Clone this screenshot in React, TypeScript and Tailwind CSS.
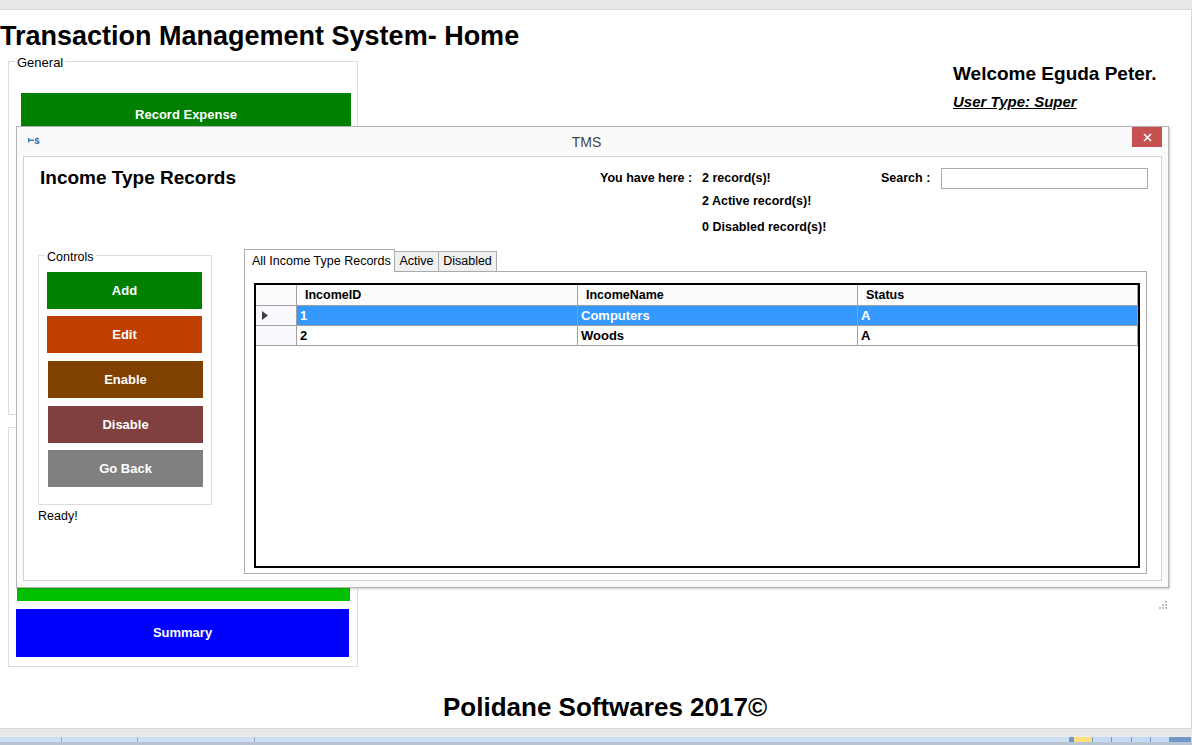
const font = "font-['Liberation_Sans',Arial,sans-serif]";

function ActionButton({ label, className }: { label: string; className: string }) {
  return (
    <button className={`flex h-[37px] w-[155px] items-center justify-center text-[13px] font-bold text-white ${className}`}>
      {label}
    </button>
  );
}

function Cell({ children, className = "" }: { children?: React.ReactNode; className?: string }) {
  return <div className={`flex items-center overflow-hidden border-r border-b border-[#a0a0a0] pl-[3px] text-[13px] font-bold ${className}`}>{children}</div>;
}

function HeaderCell({ children, className = "" }: { children?: React.ReactNode; className?: string }) {
  return <div className={`flex items-center border-r border-b border-[#a0a0a0] bg-[#fbfbfb] pl-[8px] text-[12.5px] font-bold ${className}`}>{children}</div>;
}

function Grip() {
  return (
    <svg className="absolute left-[1135px] top-[444px]" width="8" height="8" viewBox="0 0 8 8" fill="#c4c4c4">
      <rect x="6" y="0" width="2" height="2" />
      <rect x="3" y="3" width="2" height="2" />
      <rect x="6" y="3" width="2" height="2" />
      <rect x="0" y="6" width="2" height="2" />
      <rect x="3" y="6" width="2" height="2" />
      <rect x="6" y="6" width="2" height="2" />
    </svg>
  );
}

function Modal() {
  return (
    <div className="absolute left-[16px] top-[126px] flex h-[462px] w-[1153px] flex-col border border-[#b4b4b4] bg-[#fafafa] shadow-[1px_1px_2px_rgba(0,0,0,0.2)]">
      <div className="flex h-[29px] shrink-0 items-start">
        <svg className="ml-[11px] mt-[9px]" width="13" height="10" viewBox="0 0 13 10">
          <path d="M0 2h1.5v1.5H6V5H1.5v1.5H0z" fill="#2a86c8" />
          <text x="6.5" y="8" fontSize="9" fontWeight="700" fill="#1a6aa8" fontFamily="Liberation Sans">$</text>
        </svg>
        <div className="flex-1 pt-[5px] pl-[-2px] text-center text-[14px] text-[#444444] font-['Liberation_Sans',sans-serif]">TMS</div>
        <button className="mr-[6px] flex h-[20px] w-[30px] items-center justify-center bg-[#c75050]">
          <svg width="9" height="9" viewBox="0 0 9 9" stroke="#ffffff" strokeWidth="1.6">
            <path d="M1 1l7 7M8 1l-7 7" />
          </svg>
        </button>
      </div>

      <div className="relative mx-[6px] h-[425px] border border-[#d2d2d2] bg-white">
        <div className="flex h-[91px]">
          <h2 className="ml-[16px] mt-[9px] w-[560px] text-[19px] font-bold leading-[24px]">Income Type Records</h2>
          <div className="flex text-[12.5px] font-bold">
            <div className="w-[102px] pt-[14px] leading-[15px]">You have here :</div>
            <div className="flex w-[179px] flex-col pt-[14px] leading-[15px]">
              <span>2 record(s)!</span>
              <span className="mt-[8px]">2 Active record(s)!</span>
              <span className="mt-[11px]">0 Disabled record(s)!</span>
            </div>
            <div className="w-[60px] pt-[14px] leading-[15px]">Search :</div>
            <input className="mt-[11px] h-[21px] w-[207px] border border-[#ababab] bg-white" />
          </div>
        </div>

        <div className="flex">
          <div className="ml-[14px] w-[206px] shrink-0">
            <div className="relative mt-[7px] flex h-[250px] w-[174px] flex-col border border-[#dddddd] pt-[16px]">
              <span className="absolute left-[6px] top-[-6px] bg-white px-[2px] text-[12.5px] leading-[14px]">Controls</span>
              <ActionButton label="Add" className="ml-[8px] bg-[#008000]" />
              <ActionButton label="Edit" className="ml-[8px] mt-[7px] bg-[#c04000]" />
              <ActionButton label="Enable" className="ml-[9px] mt-[8px] bg-[#804000]" />
              <ActionButton label="Disable" className="ml-[9px] mt-[8px] bg-[#804040]" />
              <ActionButton label="Go Back" className="ml-[9px] mt-[7px] bg-[#808080]" />
            </div>
            <div className="mt-[4px] text-[12.5px] leading-[14px]">Ready!</div>
          </div>

          <div className="w-[903px] shrink-0">
            <div className="flex h-[23px] items-end">
              <div className="relative z-10 mb-[-1px] flex h-[23px] w-[151px] items-start border border-b-0 border-[#ababab] bg-white pl-[7px] pt-[4px] text-[12.5px] leading-[14px] whitespace-nowrap">All Income Type Records</div>
              <div className="flex h-[20px] w-[44px] items-center justify-center border-t border-r border-[#ababab] bg-[#f0f0f0] text-[12.5px]">Active</div>
              <div className="flex h-[20px] w-[58px] items-center justify-center border-t border-r border-[#ababab] bg-[#f0f0f0] text-[12.5px]">Disabled</div>
            </div>
            <div className="h-[303px] border border-[#ababab] bg-white pl-[9px] pr-[6px] pt-[11px]">
              <div className="h-[285px] w-[886px] border-2 border-black">
                <div className="grid grid-cols-[41px_281px_280px_280px] grid-rows-[21px_20px_20px]">
                  <HeaderCell />
                  <HeaderCell>IncomeID</HeaderCell>
                  <HeaderCell>IncomeName</HeaderCell>
                  <HeaderCell>Status</HeaderCell>

                  <div className="flex items-center border-r border-b border-[#a0a0a0] bg-[#f8f9fc] pl-[6px]">
                    <svg width="6" height="9" viewBox="0 0 6 9" fill="#404040"><path d="M0 0l6 4.5L0 9z" /></svg>
                  </div>
                  <Cell className="bg-[#3399ff] text-white">1</Cell>
                  <Cell className="bg-[#3399ff] text-white">Computers</Cell>
                  <Cell className="bg-[#3399ff] text-white">A</Cell>

                  <div className="border-r border-b border-[#a0a0a0] bg-[#f8f9fc]" />
                  <Cell>2</Cell>
                  <Cell>Woods</Cell>
                  <Cell>A</Cell>
                </div>
              </div>
            </div>
          </div>
        </div>
        <Grip />
      </div>
    </div>
  );
}

function Taskbar() {
  return (
    <div className="flex h-[17px] shrink-0 flex-col">
      <div className="h-[9px] border-t border-[#d8d8d8] bg-[#e9e9e9]" />
      <div className="flex h-[5px] bg-[#cfe0f5]">
        <div className="w-[62px] border-r border-[#9aa8b8]" />
        <div className="w-[76px] border-r border-[#9aa8b8]" />
        <div className="w-[117px] border-r border-[#9aa8b8]" />
        <div className="ml-[814px] flex w-[122px] gap-[1px] bg-[#7097c8] pl-[5px] pr-[22px]">
          <div className="w-[18px] bg-[#ffdf80]" />
          <div className="flex-1 bg-[#c4daf5]" />
          <div className="flex-1 bg-[#c4daf5]" />
          <div className="flex-1 bg-[#c4daf5]" />
          <div className="flex-1 bg-[#c4daf5]" />
        </div>
      </div>
      <div className="h-[3px] bg-[#b8c4d4]" />
    </div>
  );
}

export default function App() {
  return (
    <div className={`relative flex h-[745px] w-[1192px] flex-col overflow-hidden bg-white text-black ${font}`}>
      <div className="h-[10px] shrink-0 border-b border-[#d8d8d8] bg-[#e9e9e9]" />

      <div className="flex h-[718px] flex-col border-r border-[#d8d8d8]">
        <h1 className="mt-[10px] h-[33px] whitespace-nowrap text-[27px] font-bold leading-[33px]">Transaction Management System- Home</h1>

        <div className="flex flex-1">
          <div className="ml-[8px] w-[350px] shrink-0">
            <div className="relative mt-[8px] h-[354px] border border-[#dcdcdc] pl-[12px] pt-[31px]">
              <span className="absolute left-[6px] top-[-7px] bg-white px-[2px] text-[13px] leading-[15px]">General</span>
              <button className="h-[48px] w-[330px] bg-[#008000] pb-[4px] text-[13px] font-bold text-white">Record Expense</button>
            </div>
            <div className="mt-[12px] flex h-[240px] flex-col justify-end border border-[#dcdcdc] pb-[9px]">
              <div className="ml-[8px] h-[48px] w-[333px] bg-[#00c000]" />
              <button className="ml-[7px] mt-[8px] h-[48px] w-[333px] bg-[#0000ff] text-[13px] font-bold text-white">Summary</button>
            </div>
          </div>
          <div className="ml-[595px] pt-[9px]">
            <div className="text-[19px] font-bold leading-[24px] whitespace-nowrap">Welcome Eguda Peter.</div>
            <div className="mt-[7px] text-[15px] font-bold italic underline leading-[18px] whitespace-nowrap">User Type: Super</div>
          </div>
        </div>

        <div className="mb-[5px] ml-[443px] text-[26px] font-bold leading-[32px] whitespace-nowrap">Polidane Softwares 2017©</div>
      </div>

      <Taskbar />
      <Modal />
    </div>
  );
}
